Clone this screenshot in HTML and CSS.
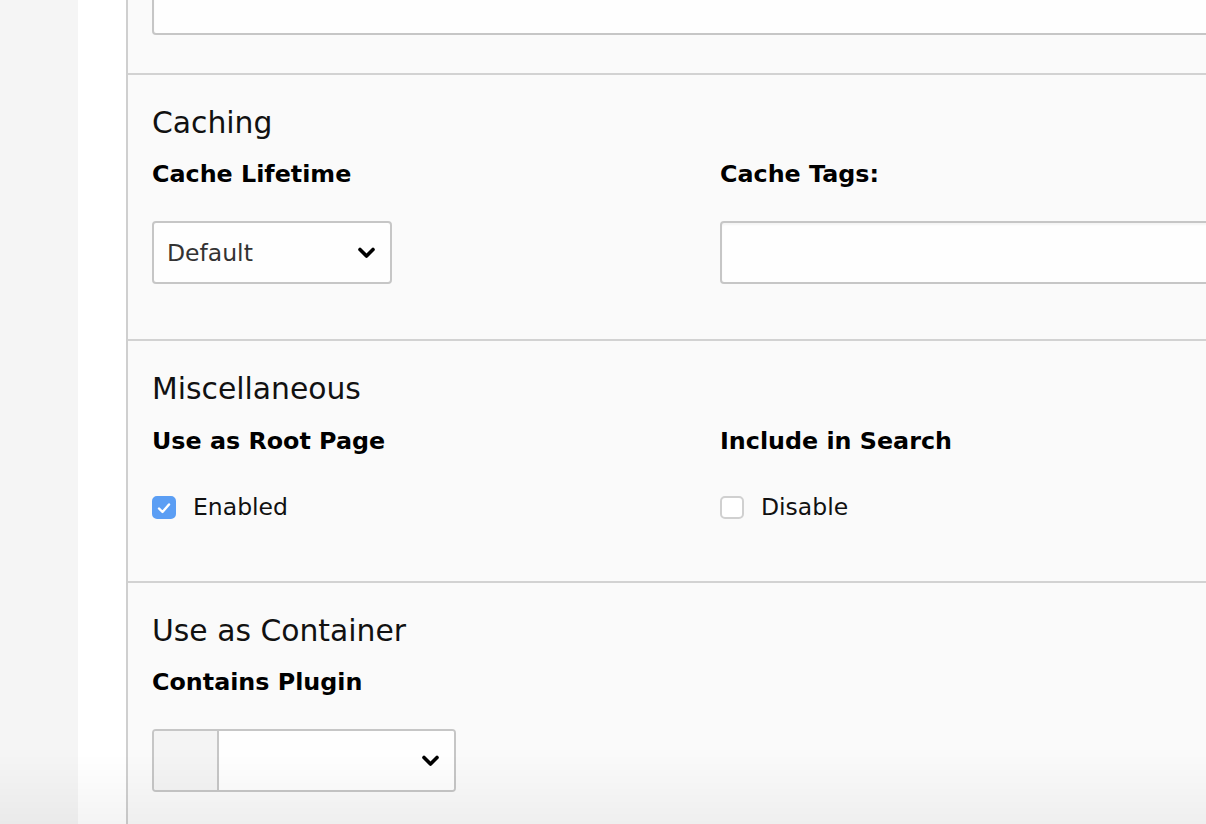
FILE: index.html
```html
<!DOCTYPE html>
<html>
<head>
<meta charset="utf-8">
<link rel="stylesheet" href="styles.css">
</head>
<body>
<div class="page">
  <aside class="rail"></aside>
  <div class="gutter"></div>
  <main class="panel">
    <section class="section section-top">
      <div class="input input-wide"></div>
    </section>

    <section class="section section-caching">
      <h2 class="heading">Caching</h2>
      <div class="grid">
        <div class="field">
          <div class="label">Cache Lifetime</div>
          <div class="select select-lifetime">
            <span class="select-text">Default</span>
            <svg class="chevron" width="17" height="12" viewBox="0 0 17 12"><polyline points="2,2.5 8.5,9 15,2.5" fill="none" stroke="#000" stroke-width="3.6" stroke-linecap="round" stroke-linejoin="round"/></svg>
          </div>
        </div>
        <div class="field">
          <div class="label">Cache Tags:</div>
          <div class="input input-tags"></div>
        </div>
      </div>
    </section>

    <section class="section section-misc">
      <h2 class="heading">Miscellaneous</h2>
      <div class="grid">
        <div class="field">
          <div class="label">Use as Root Page</div>
          <label class="check-row">
            <span class="checkbox checked">
              <svg width="14" height="12" viewBox="0 0 14 12"><polyline points="2,6.5 5.5,10 12,2.5" fill="none" stroke="#fff" stroke-width="2.4" stroke-linecap="round" stroke-linejoin="round"/></svg>
            </span>
            <span class="check-text">Enabled</span>
          </label>
        </div>
        <div class="field">
          <div class="label">Include in Search</div>
          <label class="check-row">
            <span class="checkbox"></span>
            <span class="check-text">Disable</span>
          </label>
        </div>
      </div>
    </section>

    <section class="section section-last">
      <h2 class="heading">Use as Container</h2>
      <div class="field">
        <div class="label">Contains Plugin</div>
        <div class="select select-plugin">
          <span class="select-icon"></span>
          <span class="select-body">
            <svg class="chevron" width="17" height="12" viewBox="0 0 17 12"><polyline points="2,2.5 8.5,9 15,2.5" fill="none" stroke="#000" stroke-width="3.6" stroke-linecap="round" stroke-linejoin="round"/></svg>
          </span>
        </div>
      </div>
    </section>
  </main>
</div>
<div class="bottom-fade"></div>
</body>
</html>
```

FILE: styles.css
```css
html, body {
  margin: 0;
  padding: 0;
  height: 100%;
  overflow: hidden;
  background: #fafafa;
}

body {
  font-family: "DejaVu Sans", Verdana, sans-serif;
  color: #000;
}

.page {
  display: flex;
  width: 1400px;
  min-height: 824px;
}

.rail {
  width: 78px;
  flex: none;
  background: #f5f5f5;
}

.gutter {
  width: 48px;
  flex: none;
  background: #ffffff;
  border-right: 2px solid #cfcfcf;
}

.panel {
  flex: 1;
  background: #fafafa;
}

.section {
  padding: 30px 0 56px 24px;
  border-top: 2px solid #d2d2d2;
}

.section-top {
  border-top: none;
  padding: 0 0 38px 24px;
  margin-top: -28px;
}

.section-caching {
  padding-bottom: 55px;
}

.section-misc {
  padding-bottom: 60px;
}

.section-last {
  padding-bottom: 40px;
}

.heading {
  margin: 0;
  font-size: 29.8px;
  line-height: 35px;
  font-weight: normal;
  color: #111;
}

.grid {
  display: grid;
  grid-template-columns: 568px 600px;
}

.label {
  margin-top: 21px;
  font-size: 23.8px;
  line-height: 27px;
  font-weight: bold;
  color: #000;
}

.section-misc .label {
  margin-top: 22px;
}

.input {
  box-sizing: border-box;
  height: 63px;
  background: #fefefe;
  border: 2px solid #c6c6c6;
  border-radius: 4px;
  box-shadow: inset 0 2px 2px rgba(0, 0, 0, 0.04);
}

.input-wide {
  width: 1200px;
}

.input-tags {
  margin-top: 33px;
  width: 560px;
}

.select {
  box-sizing: border-box;
  height: 63px;
  margin-top: 33px;
  border: 2px solid #c6c6c6;
  border-radius: 4px;
  background: #fefefe;
  display: flex;
  align-items: center;
}

.select-lifetime {
  width: 240px;
  padding: 0 15px 0 13px;
  justify-content: space-between;
}

.select-text {
  font-size: 23.5px;
  color: #333;
}

.chevron {
  display: block;
  flex: none;
}

.select-plugin {
  width: 304px;
  overflow: hidden;
  align-items: stretch;
}

.select-icon {
  width: 63px;
  flex: none;
  background: #f4f4f4;
  border-right: 2px solid #c6c6c6;
}

.select-body {
  flex: 1;
  display: flex;
  align-items: center;
  justify-content: flex-end;
  padding-right: 15px;
  background: #fefefe;
}

.check-row {
  display: flex;
  align-items: center;
  gap: 17px;
  margin-top: 39px;
  height: 27px;
}

.checkbox {
  box-sizing: border-box;
  width: 24px;
  height: 23px;
  flex: none;
  border: 2px solid #d0d0d0;
  border-radius: 5px;
  background: #fff;
  display: flex;
  align-items: center;
  justify-content: center;
}

.checkbox.checked {
  background: #5b9ef4;
  border-color: #5b9ef4;
}

.check-text {
  font-size: 23.5px;
  line-height: 27px;
  color: #111;
}

.bottom-fade {
  position: fixed;
  left: 0;
  right: 0;
  bottom: 0;
  height: 70px;
  background: linear-gradient(to bottom, rgba(0, 0, 0, 0), rgba(0, 0, 0, 0.045));
  pointer-events: none;
}
```
